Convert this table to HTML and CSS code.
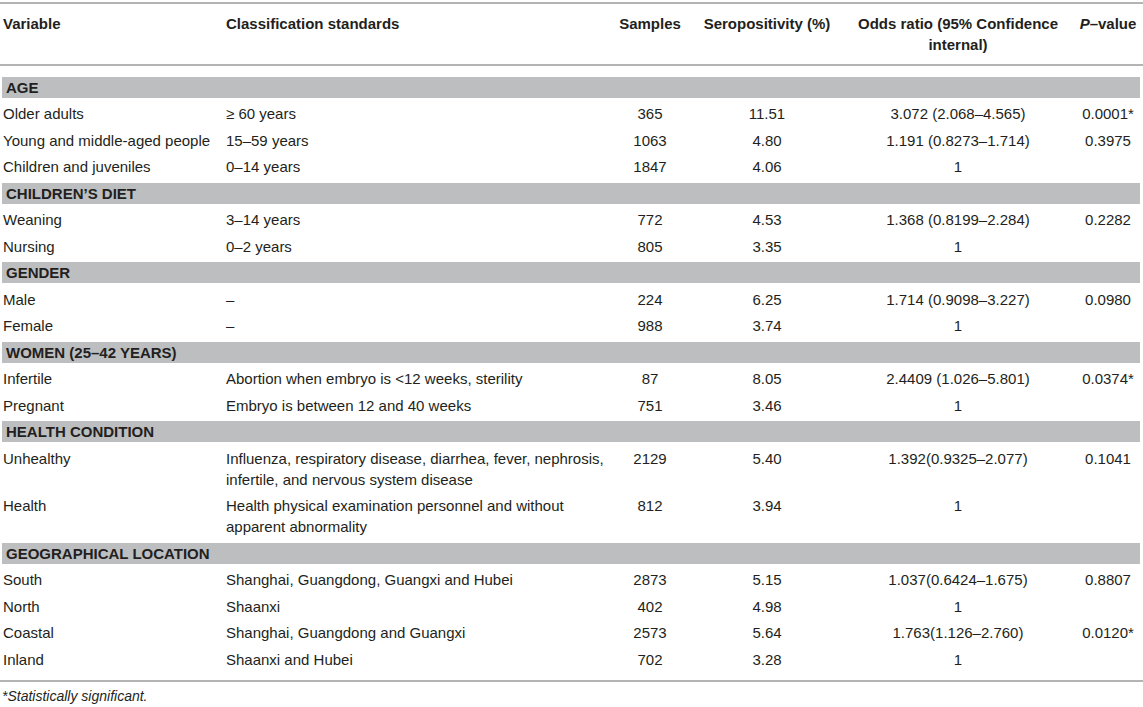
FILE: index.html
```html
<!DOCTYPE html>
<html lang="en">
<head>
<meta charset="utf-8">
<title>Seropositivity table</title>
<link rel="stylesheet" href="styles.css">
</head>
<body>
<table class="tbl">
  <colgroup>
    <col class="w-var">
    <col class="w-cls">
    <col class="w-smp">
    <col class="w-sero">
    <col class="w-odds">
    <col class="w-p">
  </colgroup>
  <thead>
    <tr>
      <th>Variable</th>
      <th>Classification standards</th>
      <th class="c">Samples</th>
      <th class="c">Seropositivity (%)</th>
      <th class="c">Odds ratio (95% Confidence internal)</th>
      <th class="c pcol"><i>P</i>–value</th>
    </tr>
  </thead>
  <tbody>
    <tr class="spacer top"><td colspan="6"></td></tr>
    <tr class="sec"><td colspan="6"><div class="band">AGE</div></td></tr>
    <tr><td>Older adults</td><td>≥ 60 years</td><td class="c">365</td><td class="c">11.51</td><td class="c">3.072 (2.068–4.565)</td><td class="c pcol">0.0001*</td></tr>
    <tr><td>Young and middle-aged people</td><td>15–59 years</td><td class="c">1063</td><td class="c">4.80</td><td class="c">1.191 (0.8273–1.714)</td><td class="c pcol">0.3975</td></tr>
    <tr><td>Children and juveniles</td><td>0–14 years</td><td class="c">1847</td><td class="c">4.06</td><td class="c">1</td><td class="c pcol"></td></tr>
    <tr class="sec"><td colspan="6"><div class="band">CHILDREN’S DIET</div></td></tr>
    <tr><td>Weaning</td><td>3–14 years</td><td class="c">772</td><td class="c">4.53</td><td class="c">1.368 (0.8199–2.284)</td><td class="c pcol">0.2282</td></tr>
    <tr><td>Nursing</td><td>0–2 years</td><td class="c">805</td><td class="c">3.35</td><td class="c">1</td><td class="c pcol"></td></tr>
    <tr class="sec"><td colspan="6"><div class="band">GENDER</div></td></tr>
    <tr><td>Male</td><td>–</td><td class="c">224</td><td class="c">6.25</td><td class="c">1.714 (0.9098–3.227)</td><td class="c pcol">0.0980</td></tr>
    <tr><td>Female</td><td>–</td><td class="c">988</td><td class="c">3.74</td><td class="c">1</td><td class="c pcol"></td></tr>
    <tr class="sec"><td colspan="6"><div class="band">WOMEN (25–42 YEARS)</div></td></tr>
    <tr><td>Infertile</td><td>Abortion when embryo is &lt;12 weeks, sterility</td><td class="c">87</td><td class="c">8.05</td><td class="c">2.4409 (1.026–5.801)</td><td class="c pcol">0.0374*</td></tr>
    <tr><td>Pregnant</td><td>Embryo is between 12 and 40 weeks</td><td class="c">751</td><td class="c">3.46</td><td class="c">1</td><td class="c pcol"></td></tr>
    <tr class="sec"><td colspan="6"><div class="band">HEALTH CONDITION</div></td></tr>
    <tr><td>Unhealthy</td><td>Influenza, respiratory disease, diarrhea, fever, nephrosis, infertile, and nervous system disease</td><td class="c">2129</td><td class="c">5.40</td><td class="c">1.392(0.9325–2.077)</td><td class="c pcol">0.1041</td></tr>
    <tr><td>Health</td><td>Health physical examination personnel and without apparent abnormality</td><td class="c">812</td><td class="c">3.94</td><td class="c">1</td><td class="c pcol"></td></tr>
    <tr class="sec"><td colspan="6"><div class="band">GEOGRAPHICAL LOCATION</div></td></tr>
    <tr><td>South</td><td>Shanghai, Guangdong, Guangxi and Hubei</td><td class="c">2873</td><td class="c">5.15</td><td class="c">1.037(0.6424–1.675)</td><td class="c pcol">0.8807</td></tr>
    <tr><td>North</td><td>Shaanxi</td><td class="c">402</td><td class="c">4.98</td><td class="c">1</td><td class="c pcol"></td></tr>
    <tr><td>Coastal</td><td>Shanghai, Guangdong and Guangxi</td><td class="c">2573</td><td class="c">5.64</td><td class="c">1.763(1.126–2.760)</td><td class="c pcol">0.0120*</td></tr>
    <tr><td>Inland</td><td>Shaanxi and Hubei</td><td class="c">702</td><td class="c">3.28</td><td class="c">1</td><td class="c pcol"></td></tr>
    <tr class="spacer bottom"><td colspan="6"></td></tr>
  </tbody>
</table>
<p class="footnote">*Statistically significant.</p>
</body>
</html>
```

FILE: styles.css
```css
html, body {
  margin: 0;
  padding: 0;
  background: #ffffff;
}

body {
  font-family: "Liberation Sans", Arial, Helvetica, sans-serif;
  font-size: 15px;
  color: #231f20;
}

.tbl {
  width: 1143px;
  table-layout: fixed;
  border-collapse: separate;
  border-spacing: 0;
  margin-top: 2px;
  border-top: 2px solid #b4b4b4;
  border-bottom: 2px solid #b4b4b4;
}

.w-var { width: 223px; }
.w-cls { width: 392px; }
.w-smp { width: 70px; }
.w-sero { width: 164px; }
.w-odds { width: 218px; }
.w-p { width: 76px; }

.tbl th,
.tbl td {
  padding: 2.75px 3px;
  line-height: 21px;
  vertical-align: top;
  text-align: left;
  font-weight: normal;
}

.tbl thead th {
  font-weight: bold;
  padding-top: 8.5px;
  padding-bottom: 9.5px;
  border-bottom: 2px solid #b4b4b4;
}

.tbl .c {
  text-align: center;
}

.tbl .pcol {
  padding-left: 8px;
  padding-right: 2px;
}

.tbl .spacer td {
  padding: 0;
  line-height: 0;
}

.tbl .spacer.top td {
  height: 8px;
}

.tbl .spacer.bottom td {
  height: 7px;
}

.tbl .sec td {
  padding: 2.75px 3px 2.75px 2px;
}

.band {
  background: #bcbec0;
  font-weight: bold;
  padding-left: 4px;
  line-height: 21px;
}

.footnote {
  margin: 0;
  padding: 6px 0 0 2px;
  font-size: 14px;
  line-height: 16px;
  font-style: italic;
}
```
